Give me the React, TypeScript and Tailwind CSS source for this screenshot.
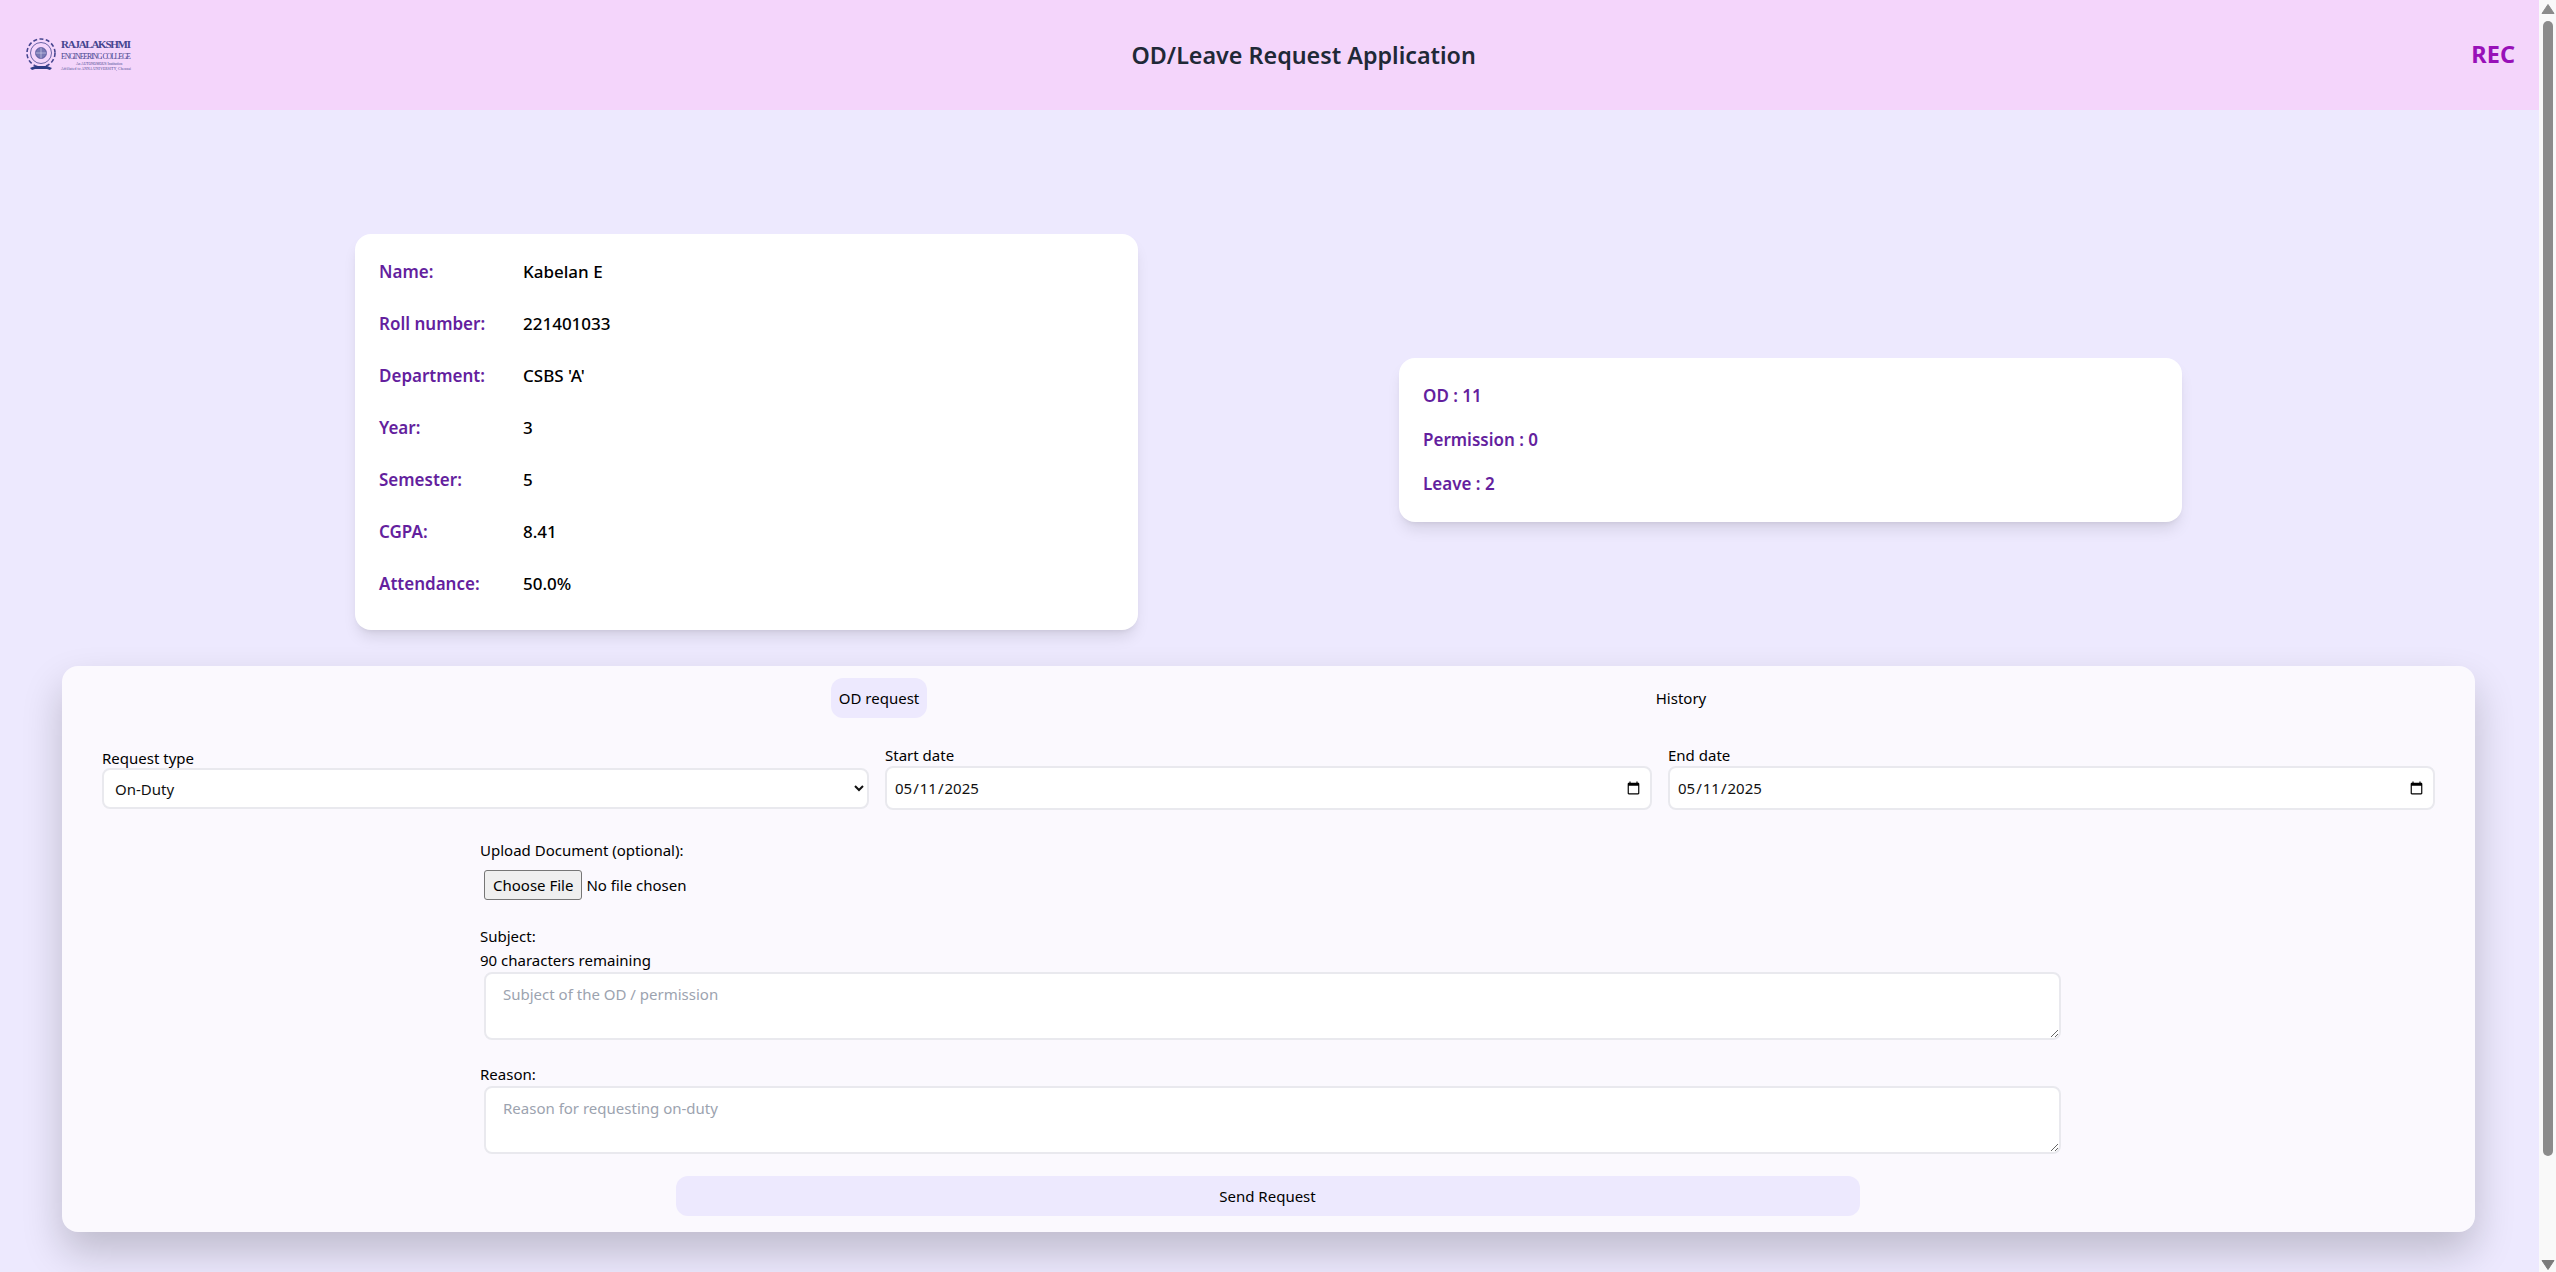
const FONT = "font-['Noto_Sans',sans-serif]";

const studentInfo = [
  ["Name:", "Kabelan E"],
  ["Roll number:", "221401033"],
  ["Department:", "CSBS 'A'"],
  ["Year:", "3"],
  ["Semester:", "5"],
  ["CGPA:", "8.41"],
  ["Attendance:", "50.0%"],
];

const controlClass =
  "w-full h-[41px] rounded-lg border-2 border-[#e9e9ee] bg-white text-[15px] text-[#111] outline-none";
const areaClass =
  "block w-[1577px] h-[68px] ml-1 rounded-lg border-2 border-[#e9e9ee] bg-white px-[17px] py-[10px] text-[15px] leading-[20px] outline-none placeholder:text-[#9ca3af]";

function Logo() {
  return (
    <svg width="112" height="36" viewBox="0 0 112 36" className="ml-6">
      <g fill="none" stroke="#45458f">
        <circle cx="17" cy="16" r="14" strokeWidth="1.6" strokeDasharray="4 2.4" />
        <circle cx="17" cy="16" r="10.5" strokeWidth="0.8" />
        <circle cx="17" cy="16" r="5.5" fill="#7a79b4" strokeWidth="0.7" />
        <path d="M11.5 16h11M17 10.5v11" stroke="#d9d4ef" strokeWidth="0.6" />
      </g>
      <path d="M6 31l5-2h12l5 2-2 2-3-1H11l-3 1z" fill="#2f3b85" />
      <g fill="#45458f" fontFamily="'Liberation Serif', serif">
        <text x="37" y="11" fontSize="11" fontWeight="700" textLength="70">RAJALAKSHMI</text>
        <text x="37" y="22" fontSize="7.6" textLength="70">ENGINEERING COLLEGE</text>
        <text x="52" y="28" fontSize="3.6">An AUTONOMOUS Institution</text>
        <text x="37" y="33" fontSize="3.6" textLength="70">Affiliated to ANNA UNIVERSITY, Chennai</text>
      </g>
    </svg>
  );
}

function Scrollbar() {
  return (
    <div aria-hidden className="w-[17px] shrink-0 h-screen bg-[#f9f9f9] flex flex-col items-center">
      <svg width="14" height="14" viewBox="0 0 14 14" className="mt-[2px] shrink-0">
        <path d="M7 2.5 13 11.5H1z" fill="#8b8b8b" stroke="#8b8b8b" strokeLinejoin="round" />
      </svg>
      <div className="w-[10px] h-[1135px] mt-[5px] rounded-full bg-[#8b8b8b]" />
      <svg width="14" height="14" viewBox="0 0 14 14" className="mt-auto shrink-0">
        <path d="M7 11.5 1 2.5h12z" fill="#7b7b7b" stroke="#7b7b7b" strokeLinejoin="round" />
      </svg>
    </div>
  );
}

export default function App() {
  return (
    <div className={`flex h-screen overflow-hidden bg-[#ede9fe] text-black ${FONT}`}>
      <div className="flex-1 min-w-0">
        {/* Header */}
        <header className="h-[110px] bg-[#f4d5fb] flex items-center justify-between">
          <Logo />
          <h1 className="text-[23.3px] font-semibold text-[#1f2937]">OD/Leave Request Application</h1>
          <span className="text-[23.5px] font-bold text-[#9810b8] mr-[24px]">REC</span>
        </header>

        {/* Student + counts */}
        <section className="flex justify-center items-start gap-[261px] pt-[124px] pr-[2px]">
          <div className="w-[783px] h-[396px] rounded-2xl bg-white px-6 py-[12px] shadow-[0_10px_15px_-3px_rgba(0,0,0,0.1),0_4px_6px_-4px_rgba(0,0,0,0.1)]">
            {studentInfo.map(([label, value]) => (
              <div key={label} className="flex items-center h-[52px] text-[17px]">
                <span className="w-[144px] font-semibold text-[#641f9e]">{label}</span>
                <span className="font-medium">{value}</span>
              </div>
            ))}
          </div>
          <div className="w-[783px] h-[164px] mt-[124px] rounded-2xl bg-white px-6 flex flex-col justify-center gap-[20px] text-[17px] leading-[24px] font-semibold text-[#641f9e] shadow-[0_10px_15px_-3px_rgba(0,0,0,0.1),0_4px_6px_-4px_rgba(0,0,0,0.1)]">
            <p>OD : 11</p>
            <p>Permission : 0</p>
            <p>Leave : 2</p>
          </div>
        </section>

        {/* Request form */}
        <section className="mx-[62px] w-[2413px] h-[566px] mt-[36px] rounded-2xl bg-[#fbf9fe] px-10 pt-[12px] text-[15px] shadow-[0_20px_40px_rgba(0,0,0,0.2)]">
          <div className="grid grid-cols-2 w-[1604px] ml-[376px] h-[40px]">
            <button className="justify-self-center px-2 h-[40px] rounded-xl bg-[#ede9fe]">OD request</button>
            <button className="justify-self-center px-2 h-[40px]">History</button>
          </div>

          <div className="grid grid-cols-3 gap-4 items-end mt-[27px]">
            <label className="block pb-[1px]">
              <span className="block leading-[20px]">Request type</span>
              <select className={`${controlClass} px-[7px]`} defaultValue="On-Duty">
                <option>On-Duty</option>
                <option>Permission</option>
                <option>Leave</option>
              </select>
            </label>
            <label className="block">
              <span className="block leading-[20px] mb-[1px]">Start date</span>
              <input type="date" defaultValue="2025-05-11" className={`${controlClass} h-[44px] px-[7px]`} />
            </label>
            <label className="block">
              <span className="block leading-[20px] mb-[1px]">End date</span>
              <input type="date" defaultValue="2025-05-11" className={`${controlClass} h-[44px] px-[7px]`} />
            </label>
          </div>

          <div className="ml-[378px] mt-[30px]">
            <label className="block leading-[20px]">Upload Document (optional):</label>
            <input
              type="file"
              className="block ml-1 mt-[10px] h-[30px] file:h-[30px] file:mr-1 file:px-2 file:border file:border-[#767676] file:rounded-[3px] file:bg-[#efefef]"
            />
            <label className="block leading-[20px] mt-[26px]">Subject:</label>
            <p className="leading-[20px] mt-[4px]">90 characters remaining</p>
            <textarea className={`${areaClass} mt-[2px]`} placeholder="Subject of the OD / permission" />
            <label className="block leading-[20px] mt-[24px]">Reason:</label>
            <textarea className={`${areaClass} mt-[2px]`} placeholder="Reason for requesting on-duty" />
          </div>

          <div className="flex justify-center mt-[22px] pr-[2px]">
            <button className="w-[1184px] h-[40px] rounded-xl bg-[#ede9fe]">Send Request</button>
          </div>
        </section>
      </div>
      <Scrollbar />
    </div>
  );
}
